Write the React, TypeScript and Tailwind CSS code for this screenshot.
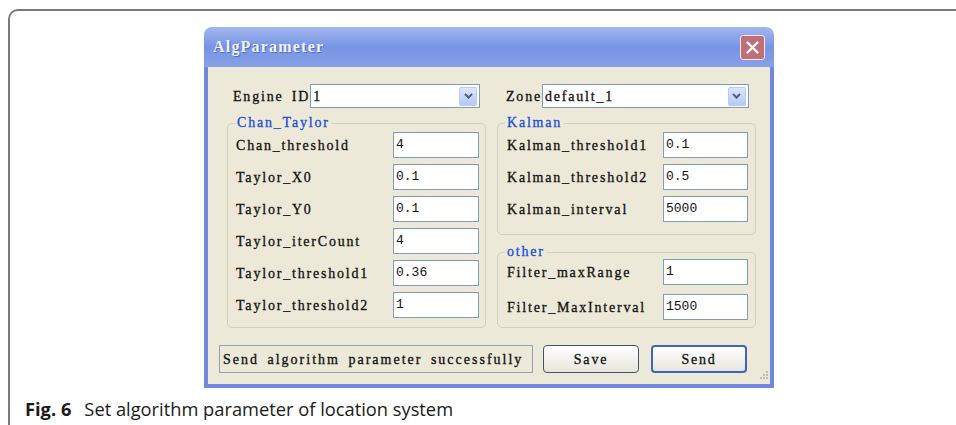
import React from "react";

type Field = { label: string; value: string };

const chanTaylor: Field[] = [
  { label: "Chan_threshold", value: "4" },
  { label: "Taylor_X0", value: "0.1" },
  { label: "Taylor_Y0", value: "0.1" },
  { label: "Taylor_iterCount", value: "4" },
  { label: "Taylor_threshold1", value: "0.36" },
  { label: "Taylor_threshold2", value: "1" },
];

const kalman: Field[] = [
  { label: "Kalman_threshold1", value: "0.1" },
  { label: "Kalman_threshold2", value: "0.5" },
  { label: "Kalman_interval", value: "5000" },
];

const other: Field[] = [
  { label: "Filter_maxRange", value: "1" },
  { label: "Filter_MaxInterval", value: "1500" },
];

// dialog text: serif face spaced out like the system bitmap font
const sys =
  "font-['Liberation_Serif',serif] text-[14px] tracking-[1.8px] [word-spacing:3px] text-[#111] [-webkit-text-stroke:0.3px_#111] whitespace-nowrap";

function TextBox({ value, w }: { value: string; w: string }) {
  return (
    <div
      className={`${w} h-[26px] shrink-0 border border-[#7f9db9] bg-white pl-[2px] flex items-center font-['Liberation_Mono',monospace] text-[13px] text-[#111]`}
    >
      {value}
    </div>
  );
}

function Row({ field, inputW }: { field: Field; inputW: string }) {
  return (
    <div className="flex items-center justify-between">
      <span className={sys}>{field.label}</span>
      <TextBox value={field.value} w={inputW} />
    </div>
  );
}

function Group({
  title,
  children,
  className,
}: {
  title: string;
  children: React.ReactNode;
  className: string;
}) {
  return (
    <div className={`relative rounded-[5px] border border-[#d0d0bf] ${className}`}>
      <span className="absolute -top-[10px] left-[7px] bg-[#ece9d8] px-[2px] font-['Liberation_Serif',serif] text-[14px] tracking-[1.8px] leading-[18px] text-[#1a4ed8] [-webkit-text-stroke:0.3px_#1a4ed8]">
        {title}
      </span>
      {children}
    </div>
  );
}

function Combo({ value, w }: { value: string; w: string }) {
  return (
    <div className={`${w} h-[24px] shrink-0 border border-[#7f9db9] bg-white flex items-center justify-between pl-[2px] pr-[2px]`}>
      <span className={sys}>{value}</span>
      <div className="w-[18px] h-[19px] rounded-[2px] border border-[#b8cbf5] bg-gradient-to-b from-[#dbe6fe] to-[#b5c9f7] flex items-center justify-center">
        <svg width="9" height="6" viewBox="0 0 9 6">
          <path d="M1 1l3.5 3.5L8 1" fill="none" stroke="#4d6185" strokeWidth="2" />
        </svg>
      </div>
    </div>
  );
}

function WinButton({ label, isDefault }: { label: string; isDefault?: boolean }) {
  return (
    <div
      className={`w-[96px] h-[28px] rounded-[4px] flex items-center justify-center bg-gradient-to-b from-[#ffffff] to-[#e6e5dc] ${sys} ${
        isDefault ? "border-2 border-[#3c67b8]" : "border-[1.5px] border-[#40566f]"
      }`}
    >
      {label}
    </div>
  );
}

export default function App() {
  return (
    <div className="w-[956px] h-[425px] bg-white overflow-hidden">
      <div className="ml-[8px] mt-[9px] h-[420px] border-t-2 border-l-2 border-[#7a7a7a] rounded-tl-[10px] pt-[16px] pl-[194px]">
        {/* dialog window */}
        <div className="w-[570px] h-[361px] flex flex-col">
          <div className="h-[40px] rounded-t-[8px] bg-gradient-to-b from-[#a3b7f0] via-[#7894e3] to-[#87a1e9] flex items-center justify-between pl-[9px] pr-[9px]">
            <span className="font-['Liberation_Serif',serif] text-[16px] font-bold tracking-[1.2px] text-[#eef2ff] [text-shadow:1px_1px_0_#5470c4]">
              AlgParameter
            </span>
            <div className="w-[25px] h-[25px] rounded-[3px] border border-[#f2e8ea] bg-[#c26e79] flex items-center justify-center">
              <svg width="15" height="15" viewBox="0 0 15 15">
                <path d="M2.5 2.5l10 10M12.5 2.5l-10 10" stroke="#fff" strokeWidth="2.4" strokeLinecap="round" />
              </svg>
            </div>
          </div>

          <div className="relative flex-1 border-x-[4px] border-b-[4px] border-[#7189dd] bg-[#ece9d8] pt-[17px] flex flex-col">
            <div className="flex pl-[25px]">
              <div className="flex items-center justify-between w-[246px]">
                <span className={sys}>Engine ID</span>
                <Combo value="1" w="w-[170px]" />
              </div>
              <div className="flex items-center justify-between w-[242px] ml-[27px]">
                <span className={sys}>Zone</span>
                <Combo value="default_1" w="w-[207px]" />
              </div>
            </div>

            <div className="flex pl-[19px] mt-[15px] gap-[11px]">
              <Group title="Chan_Taylor" className="w-[259px] h-[205px] pt-[8px] pl-[8px] pr-[6px]">
                <div className="flex flex-col gap-[6px]">
                  {chanTaylor.map((f) => (
                    <Row key={f.label} field={f} inputW="w-[86px]" />
                  ))}
                </div>
              </Group>

              <div className="flex flex-col gap-[17px]">
                <Group title="Kalman" className="w-[259px] h-[112px] pt-[8px] pl-[9px] pr-[7px]">
                  <div className="flex flex-col gap-[6px]">
                    {kalman.map((f) => (
                      <Row key={f.label} field={f} inputW="w-[85px]" />
                    ))}
                  </div>
                </Group>
                <Group title="other" className="w-[259px] h-[76px] pt-[6px] pl-[9px] pr-[7px]">
                  <div className="flex flex-col gap-[9px]">
                    {other.map((f) => (
                      <Row key={f.label} field={f} inputW="w-[85px]" />
                    ))}
                  </div>
                </Group>
              </div>
            </div>

            <div className="flex items-center pl-[11px] mt-[17px]">
              <div className={`w-[314px] h-[28px] border border-[#8fa3bd] flex items-center pl-[3px] ${sys} tracking-[2px]`}>
                Send algorithm parameter successfully
              </div>
              <div className="ml-[10px] flex gap-[12px]">
                <WinButton label="Save" />
                <WinButton label="Send" isDefault />
              </div>
            </div>

            {/* size grip */}
            <svg className="absolute right-[1px] bottom-[2px]" width="12" height="12" viewBox="0 0 12 12">
              {[
                [9, 1],
                [6, 4],
                [9, 4],
                [3, 7],
                [6, 7],
                [9, 7],
              ].map(([x, y]) => (
                <rect key={`${x}-${y}`} x={x} y={y} width="2" height="2" fill="#c0bdae" />
              ))}
            </svg>
          </div>
        </div>

        <p className="mt-[7px] -ml-[194px] pl-[15px] text-[18.3px] text-[#1a1a1a] font-['Open_Sans',sans-serif]">
          <span className="font-bold">Fig. 6</span>
          <span className="ml-[13px]">Set algorithm parameter of location system</span>
        </p>
      </div>
    </div>
  );
}
